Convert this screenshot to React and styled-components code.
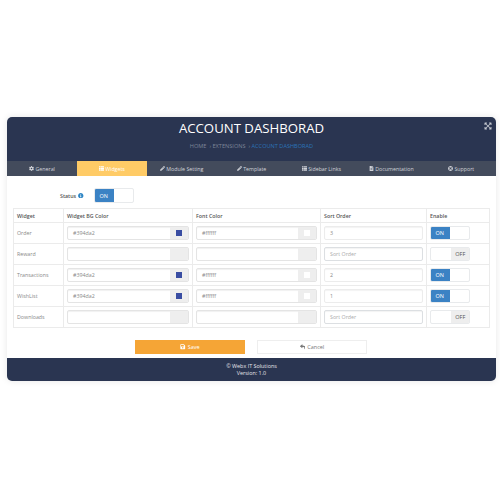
import styled, { createGlobalStyle } from "styled-components";
import { FaCog, FaThList, FaPencilAlt, FaFileAlt, FaLifeRing, FaExpandArrowsAlt, FaInfoCircle, FaSave, FaReply } from "react-icons/fa";

const tabs = [
    { label: "General", icon: <FaCog /> },
    { label: "Widgets", icon: <FaThList />, active: true },
    { label: "Module Setting", icon: <FaPencilAlt /> },
    { label: "Template", icon: <FaPencilAlt /> },
    { label: "Sidebar Links", icon: <FaThList /> },
    { label: "Documentation", icon: <FaFileAlt /> },
    { label: "Support", icon: <FaLifeRing /> },
];

const widgets = [
    { name: "Order", bg: "#394da2", font: "#ffffff", sort: "3", on: true },
    { name: "Reward", bg: "", font: "", sort: "", on: false },
    { name: "Transactions", bg: "#394da2", font: "#ffffff", sort: "2", on: true },
    { name: "WishList", bg: "#394da2", font: "#ffffff", sort: "1", on: true },
    { name: "Downloads", bg: "", font: "", sort: "", on: false },
];

function Toggle({ on, big }) {
    return (
        <ToggleBox $big={big}>
            {on ? <OnPart>ON</OnPart> : <Blank />}
            {on ? <Blank /> : <OffPart>OFF</OffPart>}
        </ToggleBox>
    );
}

function ColorField({ value }) {
    return (
        <Field>
            <FieldText>{value}</FieldText>
            <Addon>{value && <Swatch $color={value} />}</Addon>
        </Field>
    );
}

export default function App() {
    return (
        <Page>
            <Global />
            <Panel>
                <Header>
                    <Title>ACCOUNT DASHBORAD</Title>
                    <Crumbs>
                        HOME &nbsp;› EXTENSIONS &nbsp;› <CrumbActive>ACCOUNT DASHBORAD</CrumbActive>
                    </Crumbs>
                    <ExpandBtn><FaExpandArrowsAlt /></ExpandBtn>
                </Header>
                <Tabs>
                    {tabs.map(t => (
                        <Tab key={t.label} $active={t.active}>{t.icon}{t.label}</Tab>
                    ))}
                </Tabs>
                <Body>
                    <StatusRow>
                        <StatusLabel>Status <FaInfoCircle /></StatusLabel>
                        <Toggle on big />
                    </StatusRow>
                    <Table>
                        <colgroup>
                            <col style={{ width: 50 }} />
                            <col style={{ width: 129 }} />
                            <col style={{ width: 128 }} />
                            <col style={{ width: 106 }} />
                            <col style={{ width: 63 }} />
                        </colgroup>
                        <thead>
                            <tr>
                                <Th>Widget</Th>
                                <Th>Widget BG Color</Th>
                                <Th>Font Color</Th>
                                <Th>Sort Order</Th>
                                <Th>Enable</Th>
                            </tr>
                        </thead>
                        <tbody>
                            {widgets.map(w => (
                                <tr key={w.name}>
                                    <NameCell>{w.name}</NameCell>
                                    <Td><ColorField value={w.bg} /></Td>
                                    <Td><ColorField value={w.font} /></Td>
                                    <Td>
                                        <SortField $empty={!w.sort}>{w.sort || "Sort Order"}</SortField>
                                    </Td>
                                    <Td><Toggle on={w.on} /></Td>
                                </tr>
                            ))}
                        </tbody>
                    </Table>
                    <Actions>
                        <SaveBtn><FaSave />Save</SaveBtn>
                        <CancelBtn><FaReply />Cancel</CancelBtn>
                    </Actions>
                </Body>
                <Footer>
                    <div>© Webx IT Solutions</div>
                    <div>Version: 1.0</div>
                </Footer>
            </Panel>
        </Page>
    );
}

const Global = createGlobalStyle`
    html, body { margin: 0; padding: 0; background: #fff; }
    * { box-sizing: border-box; }
`

const Page = styled.div`
    width: 500px;
    height: 500px;
    padding: 117px 4px 0 7px;
    font-family: "Open Sans", "Liberation Sans", sans-serif;
    overflow: hidden;
`

const Panel = styled.div`
    width: 489px;
    height: 264px;
    display: flex;
    flex-direction: column;
    border-radius: 5px;
    overflow: hidden;
    background: #fff;
    box-shadow: 0 0 7px rgba(0,0,0,.1);
`

const Header = styled.div`
    position: relative;
    height: 44px;
    background: #2a3551;
    display: flex;
    flex-direction: column;
    align-items: center;
`

const Title = styled.div`
    color: #fff;
    font-size: 13.2px;
    line-height: 22px;
`

const Crumbs = styled.div`
    color: #7d8698;
    font-size: 5.6px;
    line-height: 10px;
    margin-top: 2px;
`

const CrumbActive = styled.span`
    color: #2a74b8;
`

const ExpandBtn = styled.div`
    position: absolute;
    top: 4px;
    right: 4px;
    color: #c4c8d0;
    font-size: 8px;
`

const Tabs = styled.div`
    height: 15px;
    display: grid;
    grid-template-columns: repeat(7, 1fr);
    background: #434b5c;
`

const Tab = styled.div`
    display: flex;
    align-items: center;
    justify-content: center;
    gap: 1.5px;
    font-size: 5.3px;
    color: ${props => props.$active ? "#fff" : "#d0d2d8"};
    background: ${props => props.$active ? "#ffcb66" : "transparent"};
    svg { font-size: 5px; }
`

const Body = styled.div`
    flex: 1;
    padding: 12px 6px 0;
    display: flex;
    flex-direction: column;
`

const StatusRow = styled.div`
    display: flex;
    align-items: center;
    height: 15px;
    padding-left: 47px;
    gap: 8px;
`

const StatusLabel = styled.div`
    display: flex;
    align-items: center;
    gap: 2px;
    width: 26px;
    font-size: 5.3px;
    font-weight: 600;
    color: #555;
    svg { color: #2f86c5; font-size: 5.5px; }
`

const ToggleBox = styled.div`
    width: 40px;
    height: ${props => props.$big ? "15px" : "14px"};
    display: flex;
    border: 1px solid #e8eaec;
    border-radius: 2px;
    overflow: hidden;
    font-size: 5.5px;
`

const OnPart = styled.div`
    flex: 1;
    margin: -1px 0 -1px -1px;
    background: #3b82c4;
    color: #fff;
    display: flex;
    align-items: center;
    justify-content: center;
`

const OffPart = styled.div`
    flex: 1;
    margin: -1px -1px -1px 0;
    background: #eeeeee;
    color: #555;
    display: flex;
    align-items: center;
    justify-content: center;
`

const Blank = styled.div`
    flex: 1;
`

const Table = styled.table`
    width: 476px;
    margin-top: 5px;
    table-layout: fixed;
    border-collapse: collapse;
    font-size: 5.3px;
    color: #888;
`

const Th = styled.th`
    height: 14px;
    padding: 0 3px;
    border: 1px solid #ebebeb;
    text-align: left;
    font-weight: 600;
    color: #555;
`

const Td = styled.td`
    height: 21px;
    padding: 0 3px;
    border: 1px solid #ebebeb;
`

const NameCell = styled(Td)`
    color: #888;
`

const Field = styled.div`
    height: 14px;
    display: flex;
    border: 1px solid #e4e4e4;
    border-radius: 2px;
    overflow: hidden;
    background: #fff;
    box-shadow: inset 0 1px 1px rgba(0,0,0,.06);
`

const FieldText = styled.div`
    flex: 1;
    padding-left: 5px;
    line-height: 12px;
    color: #888;
`

const Addon = styled.div`
    width: 18px;
    background: #eeeeee;
    display: flex;
    align-items: center;
    justify-content: center;
`

const Swatch = styled.div`
    width: 6px;
    height: 6px;
    background: ${props => props.$color};
`

const SortField = styled.div`
    height: 14px;
    width: 99px;
    padding-left: 5px;
    line-height: 12px;
    border: 1px solid ${props => props.$empty ? "#dcdfe2" : "#ececec"};
    border-radius: 2px;
    box-shadow: inset 0 1px 1px rgba(0,0,0,.05);
    color: ${props => props.$empty ? "#aaa" : "#888"};
`

const Actions = styled.div`
    display: flex;
    gap: 12px;
    margin-top: 12px;
    padding-left: 122px;
`

const SaveBtn = styled.div`
    width: 110px;
    height: 14px;
    background: #f5a536;
    color: #fff;
    font-size: 5.5px;
    display: flex;
    align-items: center;
    justify-content: center;
    gap: 2px;
`

const CancelBtn = styled(SaveBtn)`
    background: #fff;
    color: #777;
    border: 1px solid #eeeeee;
`

const Footer = styled.div`
    height: 23px;
    background: #2a3551;
    color: #e8e8ec;
    font-size: 5.4px;
    line-height: 7px;
    text-align: center;
    padding-top: 5px;
`
